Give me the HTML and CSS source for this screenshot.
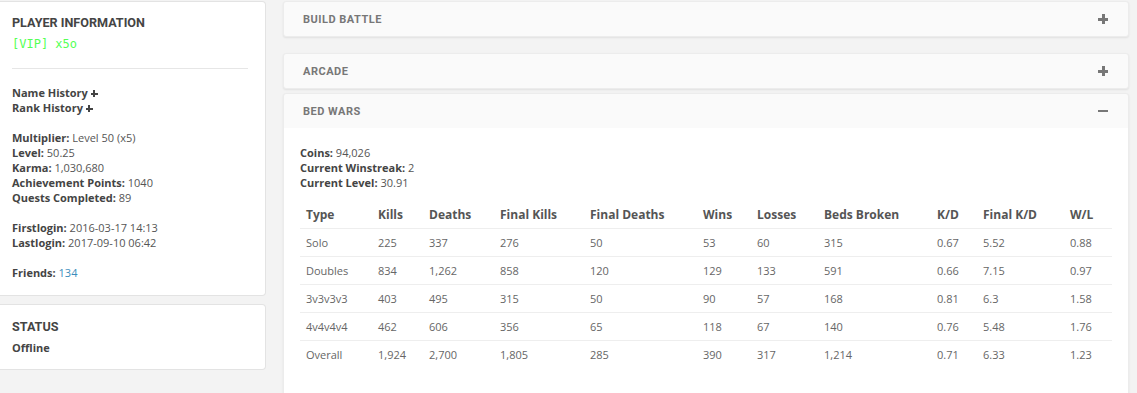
FILE: index.html
```html
<!DOCTYPE html>
<html lang="en">
<head>
    <meta charset="UTF-8">
    <title>Player Stats</title>
    <link rel="stylesheet" href="styles.css">
</head>
<body>
    <div class="layout">
        <!-- Left column -->
        <div class="side">
            <div class="card">
                <h3 class="card-title">Player Information</h3>
                <div class="rank">[VIP] x5o</div>
                <hr class="divider">
                <div class="info">
                    <p><b>Name History</b> <span class="mini-plus"></span><br>
                       <b>Rank History</b> <span class="mini-plus"></span></p>
                    <p><b>Multiplier:</b> Level 50 (x5)<br>
                       <b>Level:</b> 50.25<br>
                       <b>Karma:</b> 1,030,680<br>
                       <b>Achievement Points:</b> 1040<br>
                       <b>Quests Completed:</b> 89</p>
                    <p><b>Firstlogin:</b> 2016-03-17 14:13<br>
                       <b>Lastlogin:</b> 2017-09-10 06:42</p>
                    <p><b>Friends:</b> <a href="#">134</a></p>
                </div>
            </div>
            <div class="card status">
                <h3 class="card-title">Status</h3>
                <div class="info"><b>Offline</b></div>
            </div>
        </div>

        <!-- Right column: game panels -->
        <div class="main">
            <div class="panel first">
                <div class="panel-head">Build Battle <span class="toggle plus"></span></div>
            </div>
            <div class="panel">
                <div class="panel-head">Arcade <span class="toggle plus"></span></div>
            </div>
            <div class="panel open">
                <div class="panel-head">Bed Wars <span class="toggle"></span></div>
                <div class="panel-body">
                    <div class="info">
                        <b>Coins:</b> 94,026<br>
                        <b>Current Winstreak:</b> 2<br>
                        <b>Current Level:</b> 30.91
                    </div>
                    <table class="stats">
                        <thead>
                            <tr>
                                <th>Type</th><th>Kills</th><th>Deaths</th><th>Final Kills</th><th>Final Deaths</th>
                                <th>Wins</th><th>Losses</th><th>Beds Broken</th><th>K/D</th><th>Final K/D</th><th>W/L</th>
                            </tr>
                        </thead>
                        <tbody>
                            <tr><td>Solo</td><td>225</td><td>337</td><td>276</td><td>50</td><td>53</td><td>60</td><td>315</td><td>0.67</td><td>5.52</td><td>0.88</td></tr>
                            <tr><td>Doubles</td><td>834</td><td>1,262</td><td>858</td><td>120</td><td>129</td><td>133</td><td>591</td><td>0.66</td><td>7.15</td><td>0.97</td></tr>
                            <tr><td>3v3v3v3</td><td>403</td><td>495</td><td>315</td><td>50</td><td>90</td><td>57</td><td>168</td><td>0.81</td><td>6.3</td><td>1.58</td></tr>
                            <tr><td>4v4v4v4</td><td>462</td><td>606</td><td>356</td><td>65</td><td>118</td><td>67</td><td>140</td><td>0.76</td><td>5.48</td><td>1.76</td></tr>
                            <tr><td>Overall</td><td>1,924</td><td>2,700</td><td>1,805</td><td>285</td><td>390</td><td>317</td><td>1,214</td><td>0.71</td><td>6.33</td><td>1.23</td></tr>
                        </tbody>
                    </table>
                </div>
            </div>
        </div>
    </div>
</body>
</html>
```

FILE: styles.css
```css
body {
    margin: 0;
    background-color: #f3f3f3;
    font-family: "Open Sans", sans-serif;
    font-size: 11px;
    color: #555;
}
.layout {
    display: flex;
    gap: 17px;
    padding-top: 1px;
    width: 1129px;
}
.side {
    width: 266px;
    flex: none;
}
.main {
    flex: 1;
}
.card {
    background: #fff;
    border: 1px solid #e3e3e3;
    border-left: 0;
    border-radius: 0 4px 4px 0;
    padding: 13px 17px 15px 12px;
    margin-bottom: 8px;
}
.card-title {
    font-family: Roboto, sans-serif;
    font-size: 12.6px;
    font-weight: 700;
    text-transform: uppercase;
    color: #444;
    margin: 0;
    line-height: 16px;
}
.rank {
    font-family: "DejaVu Sans Mono", monospace;
    font-size: 12px;
    color: #55ff55;
    line-height: 16px;
    margin-top: 5px;
}
.divider {
    border: 0;
    border-top: 1px solid #e6e6e6;
    margin: 16px 0 16px;
}
.info {
    line-height: 15px;
}
.info p {
    margin: 0 0 15px;
}
.info p:last-child {
    margin-bottom: 0;
}
.info b {
    color: #444;
}
.info a {
    color: #3c8dbc;
    text-decoration: none;
}
.mini-plus {
    display: inline-block;
    width: 7px;
    height: 7px;
    background:
        linear-gradient(#444, #444) center / 7px 2px no-repeat,
        linear-gradient(#444, #444) center / 2px 7px no-repeat;
}
.status {
    padding-top: 14px;
    padding-bottom: 14px;
}
.status .card-title {
    margin-bottom: 5px;
}

/* accordion panels */
.panel {
    background: #fafafa;
    border: 1px solid #ececec;
    border-radius: 3px;
    box-shadow: 0 1px 2px rgba(0, 0, 0, 0.08);
    margin-bottom: 4px;
}
.panel.first {
    margin-bottom: 16px;
}
.panel-head {
    display: flex;
    justify-content: space-between;
    align-items: center;
    height: 34px;
    padding: 0 20px 0 19px;
    font-family: Roboto, sans-serif;
    font-size: 11px;
    font-weight: 700;
    letter-spacing: 0.5px;
    text-transform: uppercase;
    color: #777;
}
.toggle {
    width: 10px;
    height: 10px;
    background: linear-gradient(#777, #777) center / 10px 2px no-repeat;
}
.toggle.plus {
    background:
        linear-gradient(#777, #777) center / 10px 3px no-repeat,
        linear-gradient(#777, #777) center / 3px 10px no-repeat;
}
.panel-body {
    background: #fff;
    padding: 17px 16px 27px;
}
.stats {
    width: 100%;
    border-collapse: collapse;
    margin-top: 11px;
    table-layout: fixed;
}
.stats th, .stats td {
    text-align: left;
    padding: 0 6px;
    height: 27px;
    border-bottom: 1px solid #eee;
}
.stats tbody tr:last-child td {
    border-bottom: 0;
}
.stats th {
    font-size: 12px;
    font-weight: 700;
    color: #555;
}
.stats td {
    color: #666;
}
.stats th:nth-child(1) { width: 60px; }
.stats th:nth-child(2) { width: 39px; }
.stats th:nth-child(3) { width: 59px; }
.stats th:nth-child(4) { width: 78px; }
.stats th:nth-child(5) { width: 101px; }
.stats th:nth-child(6) { width: 42px; }
.stats th:nth-child(7) { width: 55px; }
.stats th:nth-child(8) { width: 101px; }
.stats th:nth-child(9) { width: 34px; }
.stats th:nth-child(10) { width: 75px; }
```
